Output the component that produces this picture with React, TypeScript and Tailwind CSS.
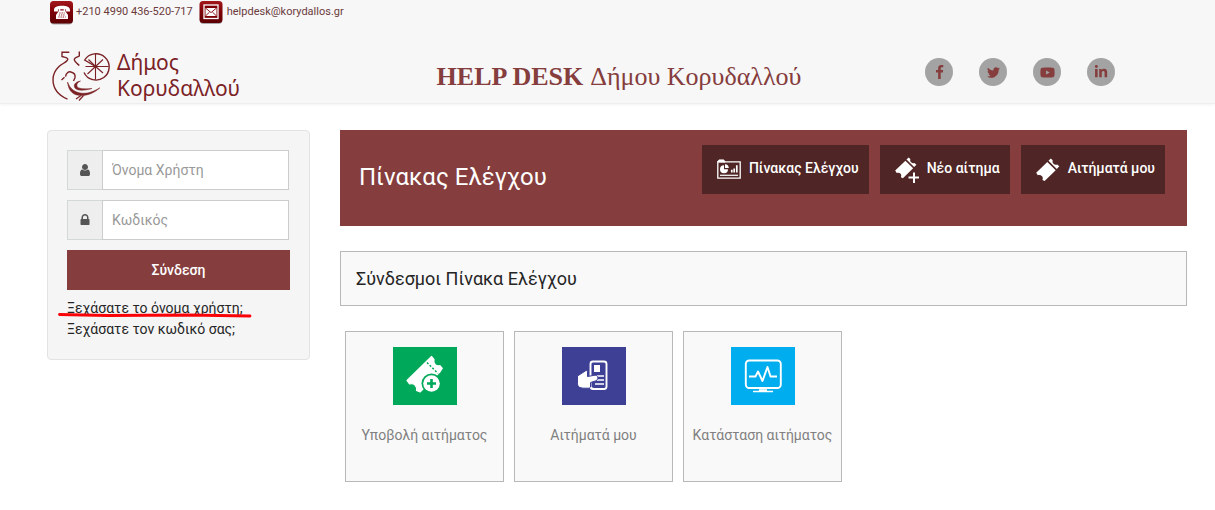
import React from "react";
import { FaTwitter, FaYoutube, FaLinkedinIn } from "react-icons/fa";

function PhoneBadge() {
  return (
    <svg width="24" height="25" viewBox="0 0 24 25" aria-hidden="true">
      <defs>
        <linearGradient id="badge" x1="0" y1="0" x2="0" y2="1">
          <stop offset="0" stopColor="#a3181c" />
          <stop offset="0.5" stopColor="#7d0007" />
          <stop offset="1" stopColor="#5c0004" />
        </linearGradient>
      </defs>
      <rect x="1.500" y="2" width="22" height="22.5" rx="3.5" fill="#a9a9a9" />
      <rect x="1" y="1" width="23" height="22.5" rx="3.5" fill="url(#badge)" />
      <path d="M5 10.2C5 7 8.500 5.800 13 5.800s8 1.200 8 4.400v1.300h-4.300V9.300H9.300v2.200H5z" fill="#fff" />
      <path d="M10 8.500h1.300v2h3.400v-2H16v2.300l3 4.200v4H7v-4l3-4.200z" fill="#fff" />
      <path d="M10.300 13h5.400M9.800 15h6.400M9.300 17h7.400" stroke="#8a0a10" strokeWidth="0.9" strokeDasharray="1.300 0.900" />
    </svg>
  );
}

function MailBadge() {
  return (
    <svg width="24" height="25" viewBox="0 0 24 25" aria-hidden="true">
      <rect x="1" y="2" width="22" height="22" rx="3.5" fill="#a9a9a9" />
      <rect x="0.5" y="1" width="23" height="22" rx="3.5" fill="url(#badge)" />
      <rect x="5" y="5" width="14" height="13.5" fill="#7d0007" stroke="#fff" strokeWidth="1.300" />
      <path d="M6.500 8h11v8h-11z" fill="#fff" />
      <path d="M6.500 8l5.500 4.600L17.500 8M6.500 16l4.100-4M17.500 16l-4.100-4" stroke="#7d0007" strokeWidth="0.9" fill="none" />
    </svg>
  );
}

function Emblem() {
  return (
    <svg width="60" height="52" viewBox="0 0 60 52" fill="none" stroke="#7b2226" strokeWidth="1.400" aria-hidden="true">
      <path d="M17.300 3.300H10v4.200c3 .9 6 1 5.800 2.600-.3 3-5.300 4-8.800 7.400C3 21.300 1 25 1 30.500c0 10 6 16 14.500 19.700" />
      <path d="M27.300 2.500V7c-2.300 1.200-5 1.600-5 3.600s2.500 3.600 5 5.900" />
      <path d="M43.500 17.500L32.700 11A13.200 13.200 0 1 1 32 23.500" />
      <path d="M43.500 4.300v26.400M43.500 17.500h13.200M43.500 17.500l-7-7M43.500 17.500l7.500-7M43.500 17.500l7.500 6.500M43.500 17.500l-8 7.500M43.500 17.500H33.500" strokeWidth="1.100" />
      <circle cx="43.500" cy="17.500" r="1.800" fill="#7b2226" stroke="none" />
      <path d="M9.500 31l3-2.700M13.500 27.700c.5-3.500 3-5.500 5.500-4.700 3.500 1 4.500 3 4 5.500-.3 1.300-1 2.300-1.500 3.500" />
      <path d="M15.500 33c1 9.500 6 13.500 13.500 13.500 8 0 14.500-3.500 19-7.800-6 3.700-12 6-18 5.500-7.500-.6-12-4.700-14.500-11.200z" fill="#7b2226" strokeWidth="0.5" />
      <path d="M28.500 32c-4.500.7-7 3.200-6 6.200 1.300 3.800 9 3.800 17.500 1.300-8 .8-14 .3-15-2.300-.7-2 .8-4 3.500-5.200z" fill="#7b2226" strokeWidth="0.5" />
      <path d="M29 46.500l-5 3.500M31.500 46.500l-4.500 5" strokeWidth="1.200" />
    </svg>
  );
}

function FacebookIcon() {
  return (
    <svg width="15" height="15" viewBox="0 0 1792 1792" fill="currentColor" aria-hidden="true">
      <path d="M1343 12v264h-157q-86 0-116 36t-30 108v189h293l-39 296h-254v759h-306v-759h-255v-296h255v-218q0-186 104-288.5t277-102.5q147 0 228 12z" />
    </svg>
  );
}

function UserIcon() {
  return (
    <svg width="14" height="14" viewBox="0 0 1792 1792" fill="currentColor" aria-hidden="true">
      <path d="M1536 1399q0 109-62.5 187t-150.5 78h-854q-88 0-150.5-78t-62.5-187q0-85 8.5-160.5t31.5-152 58.5-131 94-89 134.5-34.5q131 128 313 128t313-128q76 0 134.5 34.5t94 89 58.5 131 31.5 152 8.5 160.5zm-256-887q0 159-112.5 271.5t-271.5 112.5-271.5-112.5-112.5-271.5 112.5-271.5 271.5-112.5 271.5 112.5 112.5 271.5z" />
    </svg>
  );
}

function LockIcon() {
  return (
    <svg width="14" height="14" viewBox="0 0 1792 1792" fill="currentColor" aria-hidden="true">
      <path d="M640 768h512v-192q0-106-75-181t-181-75-181 75-75 181v192zm832 96v576q0 40-28 68t-68 28h-960q-40 0-68-28t-28-68v-576q0-40 28-68t68-28h32v-192q0-184 132-316t316-132 316 132 132 316v192h32q40 0 68 28t28 68z" />
    </svg>
  );
}

function DashboardIcon() {
  return (
    <svg width="24" height="24" viewBox="0 0 24 24" fill="none" stroke="#fff" aria-hidden="true">
      <path d="M.8 20.200V3.800h22.400v16.400z" strokeWidth="1.300" />
      <path d="M.8 4V3l1.500-1.200h4.200L8 3.200v1z" fill="#fff" strokeWidth="0.6" />
      <path d="M7 7.300v4h4a4 4 0 1 1-4-4z" fill="#fff" stroke="none" />
      <path d="M8 6.300a4 4 0 0 1 3.800 3.800H8z" fill="#fff" stroke="none" />
      <path d="M14.800 14.500v-2.700M17.200 14.500v-4M19.800 14.500V7.300" strokeWidth="1.700" />
      <path d="M3 17.300h18" strokeWidth="1.200" />
    </svg>
  );
}

const ticketBody =
  "M.2 14.800L11.300 4l8.400 8.300L8.600 23 6.400 21.900c.8-1.500.4-2.900-.6-3.900s-2.400-1.300-4-.7z";
const ticketStub =
  "M12.500 2.800L14.800.5l1.900 1.700c-.4 1.500-.1 2.700.8 3.600s2.200 1.200 3.700.7L23.300 8.300l-2.500 2.700z";

function TicketIcon() {
  return (
    <svg width="24" height="24" viewBox="0 0 24 24" fill="#fff" aria-hidden="true">
      <path d={ticketBody} />
      <path d={ticketStub} />
    </svg>
  );
}

function NewTicketIcon() {
  return (
    <svg width="24" height="26" viewBox="0 0 24 26" fill="#fff" aria-hidden="true">
      <g transform="scale(.92)">
        <path d={ticketBody} />
        <path d={ticketStub} />
      </g>
      <path d="M19 14v12M12.500 20.500H24" stroke="#4f2525" strokeWidth="4.500" />
      <path d="M19 15.500v10.500M13.500 20.500H24" stroke="#fff" strokeWidth="2" />
    </svg>
  );
}

function SubmitTile() {
  return (
    <svg width="64" height="58" viewBox="0 0 64 58" className="bg-[#00a859]" aria-hidden="true">
      <path
        d="M14 33.500L36.500 11.500 38.500 9.500l2.500 3c-.5 2.500 0 4 1.200 5.100s2.800 1.600 4.800 1.100l2.300 2.600-2 3.200L27 45l-3.500-1.500c.3-2.800-.2-4.300-1.500-5.500s-3.300-1.500-5.500-1z"
        fill="#fff"
        stroke="#fff"
        strokeWidth="1.200"
        strokeLinejoin="round"
      />
      <path d="M34 15.500l11 11" stroke="#00a859" strokeWidth="1.500" strokeDasharray="2 1.800" />
      <circle cx="38.500" cy="36.500" r="10" fill="#00a859" />
      <circle cx="38.500" cy="36.500" r="8.300" fill="#fff" />
      <path d="M38.500 32v9M34 36.500h9" stroke="#00a859" strokeWidth="2.600" />
    </svg>
  );
}

function CardsTile() {
  return (
    <svg width="64" height="58" viewBox="0 0 64 58" className="bg-[#3e4095]" fill="none" aria-hidden="true">
      <rect x="28.500" y="14.500" width="16" height="27.500" rx="2.500" stroke="#fff" strokeWidth="1.900" />
      <rect x="32" y="18" width="6" height="7" fill="#fff" />
      <path d="M33 29h9M35 33h7M33 37h9" stroke="#fff" strokeWidth="1.700" />
      <path
        d="M15.500 29l8.500-5.500c1 0 1.500.5 1.500 1.500v4.500l7.500-1.300c3.500-.2 3.800 4.600.5 5.700l-5 1.600v4.500c0 .8-.5 1.200-1.300 1.200H21l-3-.6c-1.700-.7-2.500-2-2.500-4z"
        fill="#fff"
        stroke="#3e4095"
        strokeWidth="1"
      />
      <path d="M29 40c.5 1.200 1.200 1.800 2.500 1.800" stroke="#fff" strokeWidth="1.900" />
    </svg>
  );
}

function StatusTile() {
  return (
    <svg width="64" height="58" viewBox="0 0 64 58" className="bg-[#00aeef]" fill="none" stroke="#fff" aria-hidden="true">
      <rect x="14.800" y="13.500" width="35" height="27.500" rx="3.500" strokeWidth="1.900" />
      <path d="M18 29.500h6.500l2.500-5 4.500 9.500 5-14 3 9.500H46" strokeWidth="1.900" strokeLinejoin="round" />
      <path d="M28 43h8M22 44.500h20" strokeWidth="1.700" />
    </svg>
  );
}

const socials = [
  { label: "Facebook", icon: <FacebookIcon /> },
  { label: "Twitter", icon: <FaTwitter size={13} /> },
  { label: "YouTube", icon: <FaYoutube size={15} /> },
  { label: "LinkedIn", icon: <FaLinkedinIn size={14} /> },
];

const actions = [
  { label: "Πίνακας Ελέγχου", icon: <DashboardIcon /> },
  { label: "Νέο αίτημα", icon: <NewTicketIcon /> },
  { label: "Αιτήματά μου", icon: <TicketIcon /> },
];

const tiles = [
  { label: "Υποβολή αιτήματος", icon: <SubmitTile /> },
  { label: "Αιτήματά μου", icon: <CardsTile /> },
  { label: "Κατάσταση αιτήματος", icon: <StatusTile /> },
];

const fields = [
  { id: "username", label: "Όνομα Χρήστη", type: "text", icon: <UserIcon /> },
  { id: "password", label: "Κωδικός", type: "password", icon: <LockIcon /> },
];

export default function App() {
  return (
    <div className="bg-white font-[Roboto,sans-serif] text-sm text-[#252525]">
      <header className="border-b border-[#eeeeee] bg-[#f7f7f7] shadow-[0_1px_3px_rgba(0,0,0,0.05)]">
        <div className="flex h-[47px] items-start pr-7 pl-[49px] text-[11px] leading-6 text-[#6b3a3c]">
          <a href="tel:+2104990436" className="mr-[6px] flex gap-[3px]">
            <PhoneBadge />
            +210 4990 436-520-717
          </a>
          <a href="mailto:helpdesk@korydallos.gr" className="flex gap-1">
            <MailBadge />
            helpdesk@korydallos.gr
          </a>
        </div>
        <div className="grid h-14 grid-cols-[1fr_2fr_1fr] pr-7 pl-[47px]">
          <a href="#home" className="flex items-center gap-[5px] pl-[5px] font-['Noto_Sans',sans-serif] text-[21px] leading-[26px] text-[#7b2226]">
            <Emblem />
            <span className="flex flex-col">
              <span>Δήμος</span>
              <span>Κορυδαλλού</span>
            </span>
          </a>
          <h1 className="flex items-center justify-center gap-[7px] pt-1 pl-1 font-['Liberation_Serif',serif] text-[26px] whitespace-nowrap text-[#853d3d]">
            <strong>HELP DESK</strong>
            <span>Δήμου Κορυδαλλού</span>
          </h1>
          <nav className="flex items-start gap-[26px] pt-[11px] pl-[23px]">
            {socials.map((s) => (
              <a key={s.label} href="#social" aria-label={s.label} className="flex size-7 items-center justify-center rounded-full bg-[#a3a3a3] text-[#853d3d]">
                {s.icon}
              </a>
            ))}
          </nav>
        </div>
      </header>

      <div className="grid grid-cols-[263px_1fr] items-start gap-[30px] pt-[26px] pr-7 pb-7 pl-[47px]">
        <aside className="rounded border border-[#e3e3e3] bg-[#f5f5f5] px-[19px] py-[19px]">
          <form onSubmit={(e) => e.preventDefault()}>
            {fields.map((f) => (
              <div key={f.id} className="mb-[10px] flex h-10 pr-px">
                <label htmlFor={f.id} aria-label={f.label} className="flex w-[35px] items-center justify-center border border-r-0 border-[#d3d8d8] bg-[#eeeeee] text-[#555555]">
                  {f.icon}
                </label>
                <input id={f.id} type={f.type} placeholder={f.label} className="min-w-0 flex-1 border border-[#cccccc] bg-white px-[9px] text-sm placeholder:text-[#999999]" />
              </div>
            ))}
            <button type="submit" className="h-10 w-full bg-[#853d3d] text-sm font-medium text-white">
              Σύνδεση
            </button>
          </form>
          <ul className="pt-2 leading-[21px]">
            <li className="relative">
              <a href="#forgot-username">Ξεχάσατε το όνομα χρήστη;</a>
              <svg className="absolute top-[14px] -left-[9px]" width="194" height="6" viewBox="0 0 194 6" aria-hidden="true">
                <path d="M1.500 2.500L50 3.500 130 3l62 1" stroke="#fb0207" strokeWidth="2.800" strokeLinecap="round" fill="none" />
              </svg>
            </li>
            <li>
              <a href="#forgot-password">Ξεχάσατε τον κωδικό σας;</a>
            </li>
          </ul>
        </aside>

        <main>
          <section className="flex h-24 items-start justify-between bg-[#853d3d] pt-[15px] pr-[22px] pl-[19px] text-white">
            <h2 className="pt-4 text-2xl leading-8">Πίνακας Ελέγχου</h2>
            <div className="flex gap-[11px]">
              {actions.map((a) => (
                <a key={a.label} href="#action" className="flex h-[49px] items-center gap-2 bg-[#4f2525] pr-[10px] pl-[15px] font-medium">
                  {a.icon}
                  <span className="pb-1">{a.label}</span>
                </a>
              ))}
            </div>
          </section>

          <h3 className="mt-[25px] border border-[#b8b8b8] bg-[#f9f9f9] px-[15px] py-[13px] text-lg leading-[27px]">
            Σύνδεσμοι Πίνακα Ελέγχου
          </h3>

          <section className="mt-[25px] flex gap-[10px] pl-[5px]">
            {tiles.map((t) => (
              <a key={t.label} href="#tile" className="flex h-[151px] w-[159px] flex-col items-center gap-5 border border-[#b8b8b8] bg-[#f9f9f9] pt-[15px] whitespace-nowrap text-[#808080]">
                {t.icon}
                <span>{t.label}</span>
              </a>
            ))}
          </section>
        </main>
      </div>
    </div>
  );
}
